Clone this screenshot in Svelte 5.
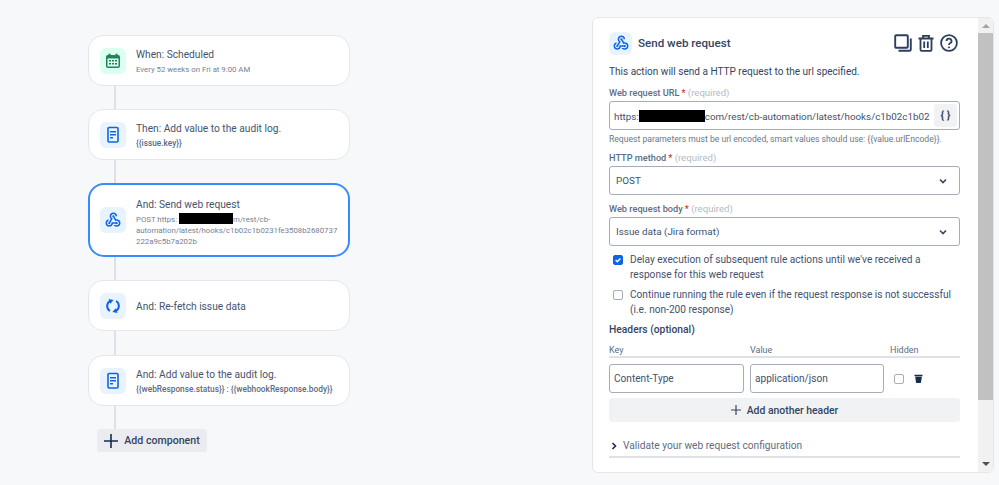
<script lang="ts">
	const rules = [
		{ id: 1, icon: 'calendar', title: 'When: Scheduled', sub: 'Every 52 weeks on Fri at 9:00 AM' },
		{ id: 2, icon: 'doc', title: 'Then: Add value to the audit log.', code: '{{issue.key}}' },
		{ id: 3, icon: 'hook', title: 'And: Send web request', active: true },
		{ id: 4, icon: 'sync', title: 'And: Re-fetch issue data' },
		{
			id: 5,
			icon: 'doc',
			title: 'And: Add value to the audit log.',
			code: '{{webResponse.status}} : {{webhookResponse.body}}'
		}
	];

	const hookPath =
		'M10 15h5.88c.27-.31.67-.5 1.12-.5.83 0 1.5.67 1.5 1.5s-.67 1.5-1.5 1.5c-.44 0-.84-.19-1.12-.5H11.9c-.46 2.28-2.48 4-4.9 4-2.76 0-5-2.24-5-5 0-2.42 1.72-4.44 4-4.9v2.07c-1.16.41-2 1.53-2 2.83 0 1.65 1.35 3 3 3s3-1.35 3-3v-1zm2.5-11c1.65 0 3 1.35 3 3h2c0-2.76-2.24-5-5-5s-5 2.24-5 5c0 1.43.6 2.71 1.55 3.62l-2.35 3.9c-.68.14-1.2.75-1.2 1.48 0 .83.67 1.5 1.5 1.5s1.5-.67 1.5-1.5c0-.16-.02-.31-.07-.45l3.38-5.63C10.49 9.61 9.5 8.42 9.5 7c0-1.65 1.35-3 3-3zm4.5 9c-.64 0-1.23.2-1.72.54l-3.05-5.07C11.53 8.35 11 7.74 11 7c0-.83.67-1.5 1.5-1.5S14 6.17 14 7c0 .15-.02.29-.06.43l2.19 3.65c.28-.05.57-.08.87-.08 2.76 0 5 2.24 5 5s-2.24 5-5 5c-1.85 0-3.47-1.01-4.33-2.5h2.67c.48.32 1.05.5 1.66.5 1.65 0 3-1.35 3-3s-1.35-3-3-3z';
</script>

{#snippet ruleIcon(kind: string)}
	{#if kind === 'calendar'}
		<svg width="16" height="16" viewBox="0 0 16 16">
			<path d="M3 2h10a2 2 0 0 1 2 2v9a2 2 0 0 1-2 2H3a2 2 0 0 1-2-2V4a2 2 0 0 1 2-2z" fill="#1f845a" />
			<rect x="3.5" y="0.5" width="2" height="3" rx="1" fill="#1f845a" />
			<rect x="10.5" y="0.5" width="2" height="3" rx="1" fill="#1f845a" />
			<rect x="2.5" y="5.5" width="11" height="8" fill="#dcfff1" />
			<path d="M4 7h2v1.5H4zM7 7h2v1.5H7zM10 7h2v1.5h-2zM4 10h2v1.5H4zM7 10h2v1.5H7zM10 10h2v1.5h-2z" fill="#1f845a" />
		</svg>
	{:else if kind === 'doc'}
		<svg width="16" height="18" viewBox="0 0 16 18">
			<rect x="3" y="1.5" width="10" height="14.5" rx="1" fill="none" stroke="#0c66e4" stroke-width="1.6" />
			<path d="M5 5h6v1.4H5zM5 8h6v1.4H5zM5 11h3v1.4H5z" fill="#0c66e4" />
		</svg>
	{:else if kind === 'hook'}
		<svg width="18" height="18" viewBox="0 0 24 24">
			<path d={hookPath} fill="#0c66e4" />
		</svg>
	{:else}
		<svg width="16" height="16" viewBox="0 0 18 18" fill="none" stroke="#0c66e4" stroke-width="2.2">
			<path d="M5.5 14.6A6.4 6.4 0 0 1 5.6 3.6" />
			<path d="M12.5 3.4A6.4 6.4 0 0 1 12.4 14.4" />
			<path d="M4 1l5.6 1.2-3.6 4.4z" fill="#0c66e4" stroke="none" />
			<path d="M14 17l-5.6-1.2 3.6-4.4z" fill="#0c66e4" stroke="none" />
		</svg>
	{/if}
{/snippet}

{#snippet chevron()}
	<svg class="chevron" width="10" height="10" viewBox="0 0 10 10" fill="none" stroke="#344563" stroke-width="1.6">
		<path d="M2 3.5l3 3 3-3" />
	</svg>
{/snippet}

<main class="page">
	<section class="flow">
		{#each rules as rule, i (rule.id)}
			{#if i > 0}<div class="link" class:wide={i === 4}></div>{/if}
			<article class="rule" class:active={rule.active}>
				<span class="icon-box" class:green={rule.icon === 'calendar'}>
					{@render ruleIcon(rule.icon)}
				</span>
				<div class="rule-text">
					<div class="rule-title">{rule.title}</div>
					{#if rule.sub}<div class="rule-sub">{rule.sub}</div>{/if}
					{#if rule.code}<div class="rule-code">{rule.code}</div>{/if}
					{#if rule.active}
						<div class="rule-sub url">POST https:<span class="redact small"></span>m/rest/cb-<br />automation/latest/hooks/c1b02c1b0231fe3508b2680737<br />222a9c5b7a202b</div>
					{/if}
				</div>
			</article>
		{/each}
		<div class="link"></div>
		<button class="add-component">
			<svg width="14" height="14" viewBox="0 0 14 14"><path d="M6.2 0h1.6v6.2H14v1.6H7.8V14H6.2V7.8H0V6.2h6.2z" fill="#172b4d" /></svg>
			Add component
		</button>
	</section>

	<aside class="panel">
		<div class="panel-body">
			<header class="panel-head">
				<span class="icon-box head-icon">
					<svg width="18" height="18" viewBox="0 0 24 24"><path d={hookPath} fill="#0c66e4" /></svg>
				</span>
				<h2>Send web request</h2>
				<div class="tools">
					<svg width="18" height="18" viewBox="0 0 18 18" fill="none" stroke="#2c3e5d" stroke-width="1.9">
						<rect x="1.2" y="1.2" width="12.6" height="12.6" rx="1" />
						<path d="M16.8 4.5v11a1.3 1.3 0 0 1-1.3 1.3h-11" />
					</svg>
					<svg width="16" height="18" viewBox="0 0 16 18" fill="none" stroke="#2c3e5d" stroke-width="1.8">
						<path d="M0.5 4.5h15M5 4.5V1.8h6v2.7M2.5 4.5v11.2a1.2 1.2 0 0 0 1.2 1.2h8.6a1.2 1.2 0 0 0 1.2-1.2V4.5M6.2 7.5v6.5M9.8 7.5v6.5" />
					</svg>
					<svg width="18" height="18" viewBox="0 0 18 18" fill="none" stroke="#2c3e5d" stroke-width="1.8">
						<circle cx="9" cy="9" r="7.9" />
						<path d="M6.5 7a2.5 2.5 0 1 1 3.6 2.3c-.8.4-1.1.9-1.1 1.7" />
						<circle cx="9" cy="13.4" r=".6" fill="#2c3e5d" stroke-width="1" />
					</svg>
				</div>
			</header>

			<p class="intro">This action will send a HTTP request to the url specified.</p>

			<label class="field-label first">Web request URL<em>*</em> <small>(required)</small></label>
			<div class="input url-input">
				<span class="url-value">https:<span class="redact"></span>com/rest/cb-automation/latest/hooks/c1b02c1b02</span>
				<span class="smart">{'{ }'}</span>
			</div>
			<p class="hint">Request parameters must be url encoded, smart values should use: {'{{value.urlEncode}}'}.</p>

			<label class="field-label method">HTTP method<em>*</em> <small>(required)</small></label>
			<div class="input select">POST {@render chevron()}</div>

			<label class="field-label body">Web request body<em>*</em> <small>(required)</small></label>
			<div class="input select">Issue data (Jira format) {@render chevron()}</div>

			<div class="check first-check">
				<span class="box checked">
					<svg width="10" height="10" viewBox="0 0 10 10" fill="none" stroke="#fff" stroke-width="1.8"><path d="M2 5l2.2 2.2L8 3" /></svg>
				</span>
				<span>Delay execution of subsequent rule actions until we've received a response for this web request</span>
			</div>
			<div class="check">
				<span class="box"></span>
				<span>Continue running the rule even if the request response is not successful (i.e. non-200 response)</span>
			</div>

			<h3>Headers (optional)</h3>
			<div class="header-grid head-row">
				<span>Key</span>
				<span>Value</span>
				<span>Hidden</span>
			</div>
			<div class="header-grid value-row">
				<div class="input plain">Content-Type</div>
				<div class="input plain">application/json</div>
				<div class="row-actions">
					<span class="box"></span>
					<svg width="9" height="9" viewBox="0 0 9 9"><path d="M0.5 0.8h8v1.4h-8zM1.2 2.8h6.6L7 8.5a.6.6 0 0 1-.6.5H2.6a.6.6 0 0 1-.6-.5z" fill="#172b4d" /></svg>
				</div>
			</div>
			<button class="add-header">
				<svg width="10" height="10" viewBox="0 0 10 10"><path d="M4.4 0h1.2v4.4H10v1.2H5.6V10H4.4V5.6H0V4.4h4.4z" fill="#344563" /></svg>
				Add another header
			</button>
			<div class="validate">
				<svg width="7" height="8" viewBox="0 0 7 8" fill="none" stroke="#172b4d" stroke-width="1.6"><path d="M1.5 1l3 3-3 3" /></svg>
				Validate your web request configuration
			</div>
		</div>
		<div class="scrollbar">
			<span class="arrow up"></span>
			<div class="track"><div class="thumb"></div></div>
			<span class="arrow down"></span>
		</div>
	</aside>
</main>

<style>
	:global(body) {
		margin: 0;
		background: #f7f8f9;
	}

	.page {
		width: 999px;
		height: 485px;
		display: flex;
		font-family: Roboto, 'Open Sans', sans-serif;
		color: #344563;
		overflow: hidden;
		box-sizing: border-box;
	}

	.flow {
		width: 262px;
		margin: 35px 0 0 88px;
		display: flex;
		flex-direction: column;
		align-items: flex-start;
	}

	.link {
		width: 2px;
		height: 23px;
		margin-left: 26px;
		background: #dfe1e6;
	}

	.link.wide {
		height: 24px;
	}

	.rule {
		width: 262px;
		min-height: 51px;
		box-sizing: border-box;
		display: flex;
		align-items: center;
		gap: 10px;
		padding: 0 11px;
		background: #fff;
		border: 1px solid #e4e6ea;
		border-radius: 15px;
	}

	.rule.active {
		height: 74px;
		border: 2px solid #388bff;
		padding: 0 10px;
		border-radius: 16px;
	}

	.rule.active .rule-text {
		padding-top: 5px;
	}

	.rule-text {
		padding-top: 2px;
	}

	.icon-box {
		width: 26px;
		height: 26px;
		flex: none;
		border-radius: 6px;
		background: #e9f2ff;
		display: flex;
		align-items: center;
		justify-content: center;
	}

	.icon-box.green {
		background: #dcfff1;
	}

	.rule-title {
		font-size: 10.2px;
		line-height: 14px;
		color: #44546f;
	}

	.rule-sub {
		font-size: 7.8px;
		line-height: 11px;
		margin-top: 2px;
		color: #758195;
	}

	.rule-sub.url {
		white-space: nowrap;
		margin-top: 1px;
	}

	.rule-code {
		font-size: 8.3px;
		font-weight: 500;
		line-height: 11px;
		margin-top: 2px;
		color: #5b6b85;
		white-space: nowrap;
	}

	.redact {
		display: inline-block;
		width: 66px;
		height: 12px;
		background: #000;
		vertical-align: -2px;
	}

	.redact.small {
		width: 54px;
		height: 11px;
		margin-left: 2px;
	}

	.add-component {
		width: 110px;
		height: 23px;
		margin-left: 9px;
		display: flex;
		align-items: center;
		justify-content: center;
		gap: 6px;
		padding: 0;
		border: 0;
		border-radius: 3px;
		background: #ebecf0;
		color: #344563;
		font: 500 10.6px Roboto, sans-serif;
	}

	.panel {
		width: 402px;
		height: 456px;
		margin: 17px 0 0 242px;
		box-sizing: border-box;
		display: flex;
		background: #fff;
		border: 1px solid #e4e6ea;
		border-radius: 6px;
		overflow: hidden;
	}

	.panel-body {
		flex: 1;
		padding: 13px 18px 0 16px;
		min-width: 0;
	}

	.panel-head {
		display: flex;
		align-items: center;
		height: 24px;
		gap: 6px;
	}

	.head-icon {
		width: 23px;
		height: 23px;
	}

	h2 {
		margin: 0;
		font-size: 11.6px;
		font-weight: 500;
		color: #344563;
	}

	.tools {
		margin-left: auto;
		margin-right: 2px;
		display: flex;
		align-items: center;
		gap: 6px;
	}

	.intro {
		margin: 10px 0 0;
		font-size: 10.05px;
		line-height: 14px;
		color: #344563;
	}

	.field-label {
		display: block;
		font-size: 9.2px;
		font-weight: 500;
		line-height: 12px;
		color: #5e6c84;
	}

	.field-label.first {
		margin-top: 8px;
	}

	.field-label.method {
		margin-top: 7px;
	}

	.field-label.body {
		margin-top: 8px;
	}

	.field-label em {
		font-style: normal;
		color: #de350b;
		margin-left: 2px;
	}

	.field-label small {
		font-size: 9.6px;
		font-weight: 400;
		color: #b3bac5;
	}

	.input {
		box-sizing: border-box;
		height: 29px;
		margin-top: 2px;
		display: flex;
		align-items: center;
		padding: 0 4px;
		border: 1px solid #a5adba;
		border-radius: 3px;
		font-size: 10.1px;
		color: #42526e;
		background: #fff;
	}

	.url-input {
		justify-content: space-between;
		padding: 0 2px 0 4px;
		font-size: 9.8px;
	}

	.url-value {
		white-space: nowrap;
	}

	.smart {
		width: 23px;
		height: 23px;
		flex: none;
		display: flex;
		align-items: center;
		justify-content: center;
		border-radius: 3px;
		background: #f1f2f4;
		font-weight: 700;
		font-size: 11px;
		color: #344563;
	}

	.select {
		justify-content: space-between;
		padding: 0 11px 0 6px;
		font-size: 9.9px;
	}

	.hint {
		margin: 3px 0 0;
		font-size: 8.6px;
		line-height: 12px;
		color: #6b778c;
		white-space: nowrap;
	}

	.check {
		display: flex;
		gap: 7px;
		margin: 5px 0 0 4px;
		font-size: 10.15px;
		line-height: 15px;
		color: #42526e;
	}

	.first-check {
		margin-top: 6px;
	}

	.box {
		flex: none;
		box-sizing: border-box;
		width: 10px;
		height: 10px;
		margin-top: 3px;
		display: flex;
		align-items: center;
		justify-content: center;
		border: 1px solid #a5adba;
		border-radius: 2px;
		background: #fff;
	}

	.box.checked {
		background: #0c66e4;
		border-color: #0c66e4;
	}

	h3 {
		margin: 6px 0 0;
		font-size: 10.3px;
		font-weight: 500;
		line-height: 14px;
		color: #344563;
	}

	.header-grid {
		display: grid;
		grid-template-columns: 135px 134px 1fr;
		column-gap: 6px;
	}

	.head-row {
		margin-top: 7px;
		border-bottom: 2px solid #dfe1e6;
		font-size: 9px;
		line-height: 12px;
		color: #5e6c84;
	}

	.value-row {
		margin-top: 6px;
	}

	.plain {
		margin: 0;
	}

	.row-actions {
		display: flex;
		align-items: center;
		gap: 10px;
		padding-left: 4px;
	}

	.row-actions .box {
		margin: 0;
	}

	.add-header {
		width: 100%;
		height: 24px;
		margin-top: 5px;
		display: flex;
		align-items: center;
		justify-content: center;
		gap: 6px;
		border: 0;
		border-radius: 3px;
		background: #f1f2f4;
		color: #344563;
		font: 500 10.4px Roboto, sans-serif;
	}

	.validate {
		margin-top: 17px;
		padding: 0 0 3px 2px;
		display: flex;
		align-items: center;
		gap: 5px;
		border-bottom: 2px solid #dfe1e6;
		font-size: 10.2px;
		line-height: 14px;
		color: #5e6c84;
	}

	.scrollbar {
		width: 15px;
		flex: none;
		display: flex;
		flex-direction: column;
		align-items: center;
		background: #f1f1f1;
	}

	.arrow {
		flex: none;
		width: 0;
		border-left: 4px solid transparent;
		border-right: 4px solid transparent;
		box-sizing: border-box;
	}

	.arrow.up {
		height: 4px;
		margin: 6px 0 5px;
		border-bottom: 4px solid #a3a3a3;
	}

	.arrow.down {
		height: 4px;
		margin: 5px 0 6px;
		border-top: 4px solid #505050;
	}

	.track {
		flex: 1;
		width: 100%;
	}

	.thumb {
		height: 367px;
		background: #c1c1c1;
	}
</style>
